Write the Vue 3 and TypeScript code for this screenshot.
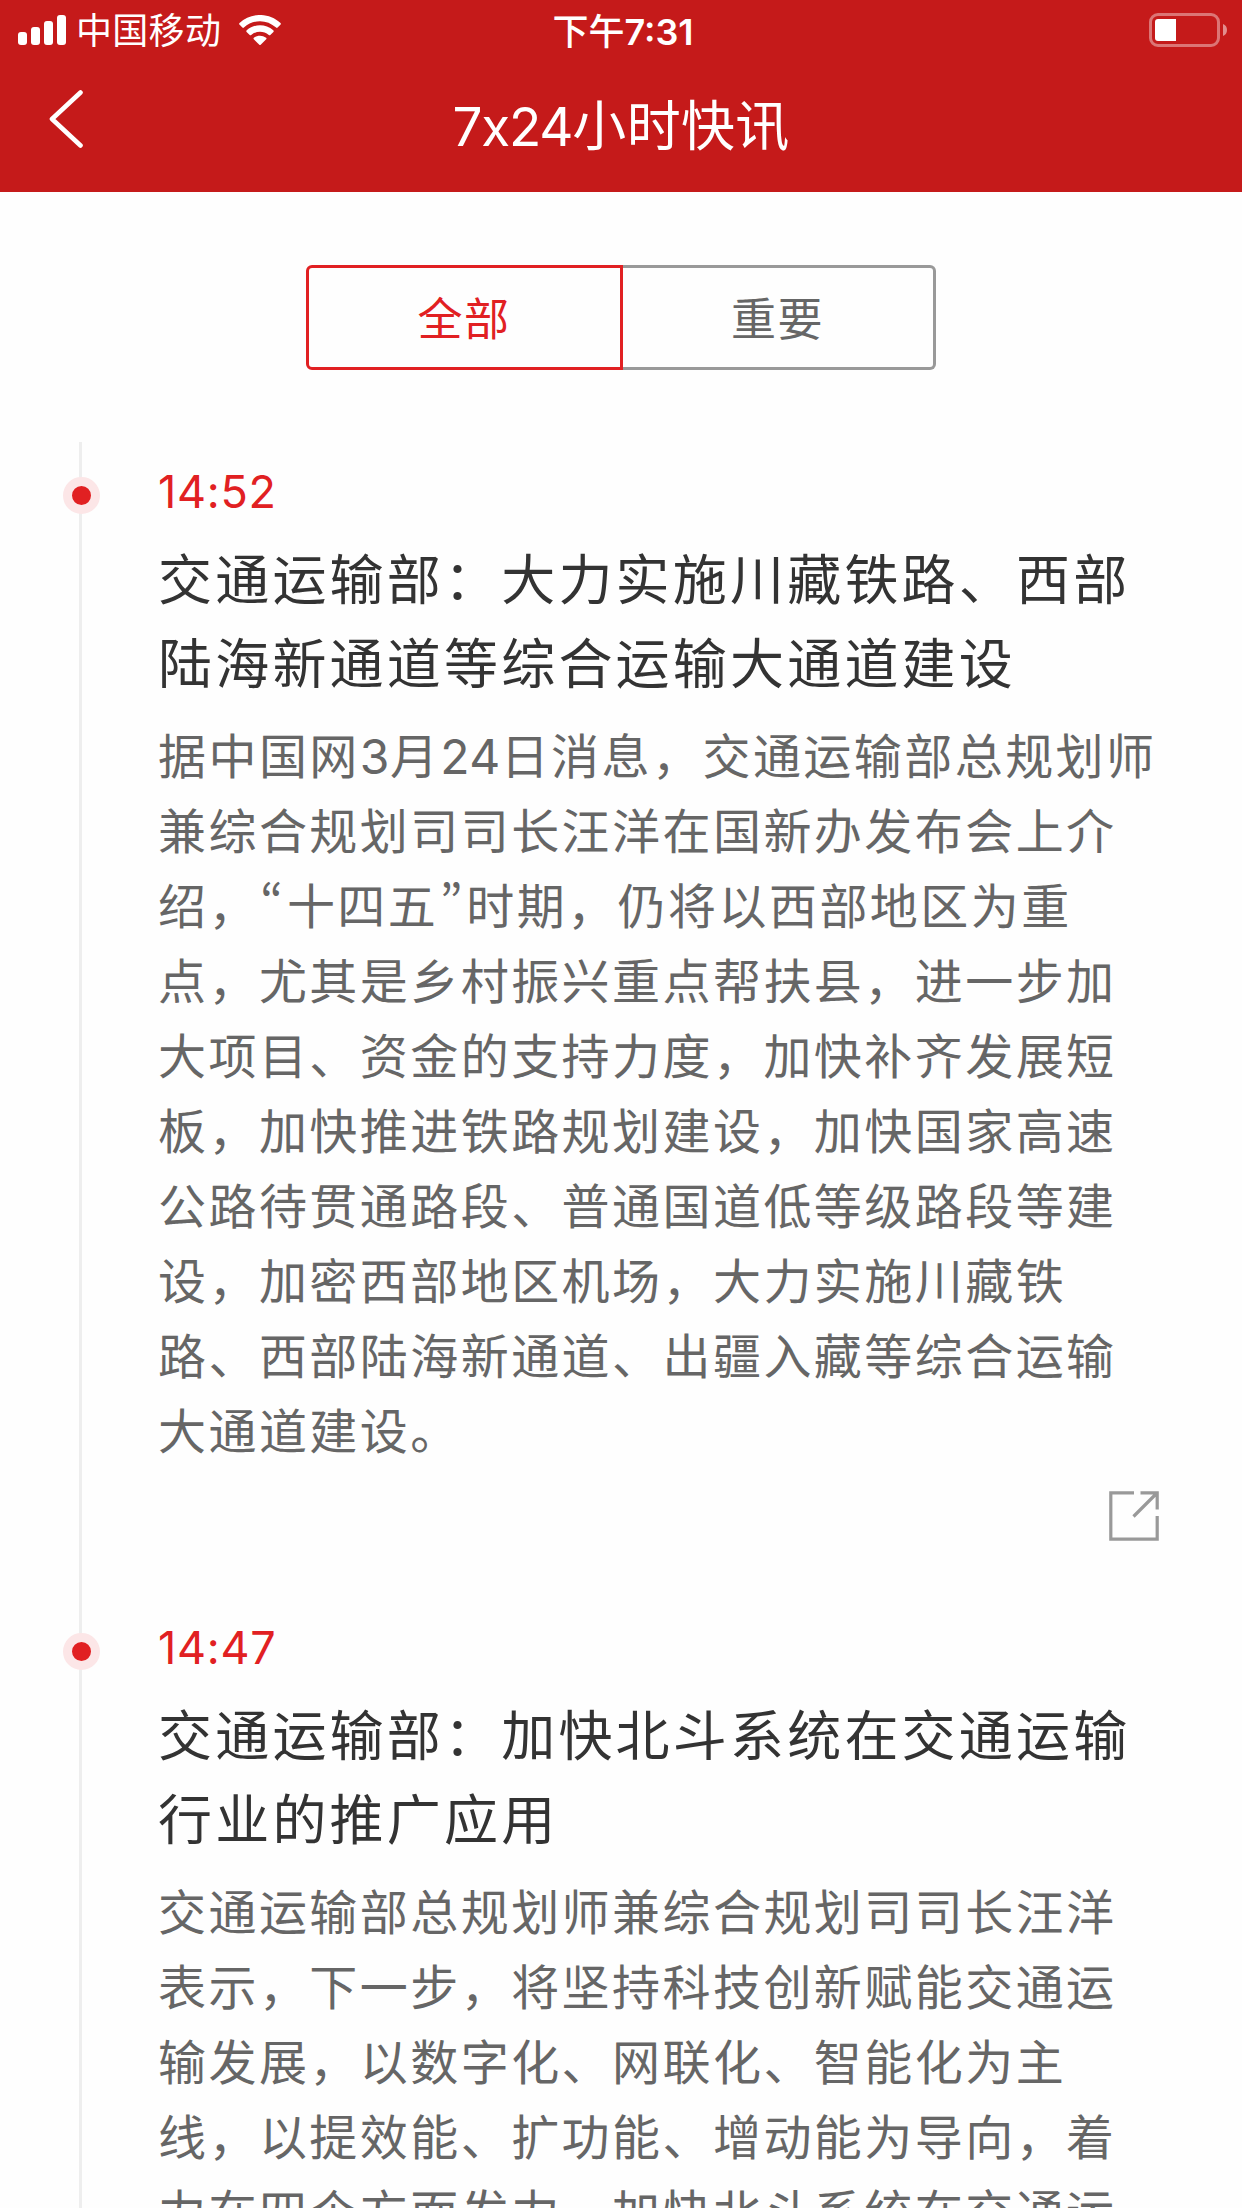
<script setup lang="ts">
import { ref } from 'vue'

interface Flash {
  time: string
  title: string[]
  body: string[]
}

const tabs: string[] = ['全部', '重要']
const active = ref(0)
const bars: number[] = [13, 18, 24, 30]

const flashes: Flash[] = [
  {
    time: '14:52',
    title: ['交通运输部：大力实施川藏铁路、西部', '陆海新通道等综合运输大通道建设'],
    body: [
      '据中国网3月24日消息，交通运输部总规划师',
      '兼综合规划司司长汪洋在国新办发布会上介',
      '绍，“十四五”时期，仍将以西部地区为重',
      '点，尤其是乡村振兴重点帮扶县，进一步加',
      '大项目、资金的支持力度，加快补齐发展短',
      '板，加快推进铁路规划建设，加快国家高速',
      '公路待贯通路段、普通国道低等级路段等建',
      '设，加密西部地区机场，大力实施川藏铁',
      '路、西部陆海新通道、出疆入藏等综合运输',
      '大通道建设。',
    ],
  },
  {
    time: '14:47',
    title: ['交通运输部：加快北斗系统在交通运输', '行业的推广应用'],
    body: [
      '交通运输部总规划师兼综合规划司司长汪洋',
      '表示，下一步，将坚持科技创新赋能交通运',
      '输发展，以数字化、网联化、智能化为主',
      '线，以提效能、扩功能、增动能为导向，着',
      '力在四个方面发力，加快北斗系统在交通运',
    ],
  },
]

// Splits a line so that curly quotes and digits get their own spacing.
const pieces = (line: string): string[] => line.split(/([“”]|\d+)/).filter(Boolean)
const kind = (s: string): string => {
  if (s === '“' || s === '”') return 'quote'
  return /^\d/.test(s) ? 'digits' : 'han'
}
</script>

<template>
  <div class="screen">
    <header class="top">
      <div class="status">
        <div class="carrier">
          <div class="signal">
            <i v-for="h in bars" :key="h" :style="{ height: h + 'px' }"></i>
          </div>
          <span class="operator">中国移动</span>
          <svg class="wifi" width="42" height="30" viewBox="0 0 42 30" fill="none">
            <path d="M0.4 9.6C0 9.1 0 8.5 0.5 8C12 -2.7 30 -2.7 41.5 8C42 8.5 42 9.1 41.6 9.6L38.6 12.6C38.2 13 37.6 13 37.1 12.6C28 4 14 4 4.9 12.6C4.4 13 3.8 13 3.4 12.6Z" fill="#fff" />
            <path d="M7.6 16.9C7.2 16.4 7.2 15.8 7.7 15.3C15.4 8.5 26.6 8.5 34.3 15.3C34.8 15.8 34.8 16.4 34.4 16.9L31.3 20C30.9 20.4 30.3 20.4 29.8 20C24.6 15.6 17.4 15.6 12.2 20C11.7 20.4 11.1 20.4 10.7 20Z" fill="#fff" />
            <path d="M14.8 24.2C14.4 23.8 14.4 23.1 14.9 22.7C18.6 20 23.4 20 27.1 22.7C27.6 23.1 27.6 23.8 27.2 24.2L21.7 29.7C21.3 30.1 20.7 30.1 20.3 29.7Z" fill="#fff" />
          </svg>
        </div>
        <div class="clock">下午<b>7:31</b></div>
        <div class="power">
          <svg width="78" height="34" viewBox="0 0 78 34">
            <rect x="1.5" y="1.5" width="68" height="31" rx="7.5" fill="none" stroke="#fff" stroke-opacity=".4" stroke-width="3" />
            <path d="M9 6H27V28H9A3 3 0 0 1 6 25V9A3 3 0 0 1 9 6Z" fill="#fff" />
            <path d="M74 11A6.5 6.5 0 0 1 74 23Z" fill="#fff" fill-opacity=".5" />
          </svg>
        </div>
      </div>
      <nav class="nav">
        <svg class="back" width="34" height="58" viewBox="0 0 34 58" fill="none">
          <path d="M31.5 2.5L3 29L31.5 55.5" stroke="#fff" stroke-width="4.6" stroke-linecap="round" stroke-linejoin="round" />
        </svg>
        <h1><span>7x24</span>小时快讯</h1>
      </nav>
    </header>

    <div class="tabs">
      <button v-for="(t, i) in tabs" :key="t" :class="{ on: active === i }" @click="active = i">{{ t }}</button>
    </div>

    <main class="timeline">
      <article v-for="f in flashes" :key="f.time" class="item">
        <div class="rail"><span class="dot"></span></div>
        <div class="content">
          <time>{{ f.time }}</time>
          <h2><span v-for="l in f.title" :key="l" class="line">{{ l }}</span></h2>
          <p>
            <span v-for="l in f.body" :key="l" class="line"><span v-for="(s, k) in pieces(l)" :key="k" :class="kind(s)">{{ s }}</span></span>
          </p>
          <svg class="share" width="50" height="50" viewBox="0 0 50 50" fill="none" stroke="#999" stroke-width="3.2">
            <path d="M25 1.8H1.8V48.2H48.2V25" />
            <path d="M31.5 1.8H48.2V18.5M48 2L24.5 25.5" />
          </svg>
        </div>
      </article>
    </main>
  </div>
</template>

<style>
body {
  margin: 0;
  overflow: hidden;
}
</style>

<style scoped>
.screen {
  width: 1242px;
  height: 2208px;
  overflow: hidden;
  background: #fefefe;
  font-family: Inter, 'Noto Sans CJK SC', sans-serif;
  color: #333;
  white-space: nowrap;
}
.top {
  height: 192px;
  background: #c51a1a;
  color: #fff;
}
.status {
  display: grid;
  grid-template-columns: 1fr auto 1fr;
  align-items: center;
  height: 60px;
}
.carrier {
  display: flex;
  align-items: center;
  padding-left: 18px;
}
.signal {
  display: flex;
  align-items: flex-end;
  gap: 4px;
}
.signal i {
  width: 9px;
  border-radius: 3px;
  background: #fff;
}
.operator {
  margin: 2px 0 0 10px;
  font-size: 36px;
  line-height: 56px;
  letter-spacing: 0.3px;
}
.wifi {
  margin-left: 18px;
}
.clock {
  margin: 3px 0 0 4px;
  font-size: 36px;
  font-weight: 500;
  line-height: 56px;
}
.clock b {
  font-weight: 600;
}
.power {
  display: flex;
  justify-content: flex-end;
  padding-right: 15px;
}
.nav {
  display: grid;
  grid-template-columns: 1fr auto 1fr;
  align-items: center;
  height: 132px;
}
.back {
  margin: -14px 0 0 49px;
}
h1 {
  margin: 2px 0 0;
  font-size: 54px;
  font-weight: 400;
  line-height: 130px;
  letter-spacing: 0.3px;
}
h1 span {
  font-size: 53px;
  font-feature-settings: 'calt' 0;
  letter-spacing: -1.2px;
}
.tabs {
  display: flex;
  width: 630px;
  height: 105px;
  margin: 73px auto 0;
}
.tabs button {
  box-sizing: border-box;
  width: 313px;
  padding: 0 1px 3px 0;
  border: 3px solid #999;
  border-left: 0;
  border-radius: 0 6px 6px 0;
  background: transparent;
  color: #666;
  font: inherit;
  font-size: 45px;
  letter-spacing: 1.5px;
}
.tabs button.on {
  width: 317px;
  border: 3px solid #e12022;
  border-radius: 6px 0 0 6px;
  color: #e12022;
}
.timeline {
  margin-top: 72px;
}
.item {
  display: flex;
}
.rail {
  display: flex;
  flex: none;
  justify-content: center;
  width: 37px;
  padding: 35px 0 0 63px;
  background: linear-gradient(#eee, #eee) 79px 0 / 3px 100% no-repeat;
}
.dot {
  box-sizing: border-box;
  width: 37px;
  height: 37px;
  border: 9px solid #fce6e7;
  border-radius: 50%;
  background: #e12022;
}
.content {
  display: flex;
  flex-direction: column;
  width: 1000px;
  padding: 20px 0 57px 58px;
}
time {
  color: #e12022;
  font-size: 45px;
  line-height: 60px;
  letter-spacing: 0.7px;
}
h2 {
  margin: 17px 0 0;
  font-size: 54px;
  font-weight: 400;
  line-height: 84px;
  letter-spacing: 3.2px;
}
p {
  margin: 12px 0 0;
  color: #666;
  font-size: 48px;
  line-height: 75px;
  letter-spacing: 2.45px;
}
.line {
  display: block;
}
.digits {
  letter-spacing: 0.4px;
}
.quote {
  margin-left: 1.4px;
  font-family: 'Noto Sans CJK SC', sans-serif;
  font-feature-settings: 'pwid';
  line-height: 0;
  letter-spacing: 3.8px;
}
.share {
  margin: 22px 0 0 951px;
}
</style>
